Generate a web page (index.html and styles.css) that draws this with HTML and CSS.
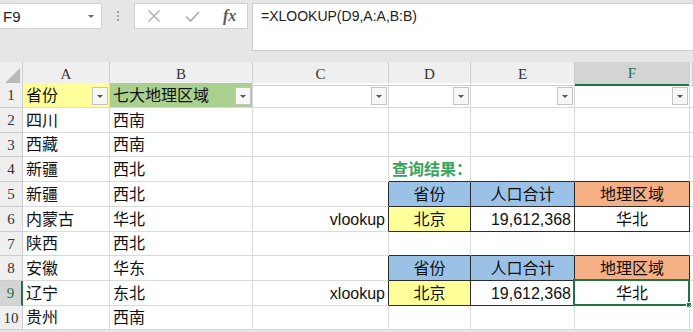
FILE: index.html
```html
<!DOCTYPE html>
<html lang="zh-CN">
<head>
  <meta charset="UTF-8">
  <title>XLOOKUP</title>
  <link rel="stylesheet" href="styles.css">
</head>
<body>
  <div class="toolbar">
    <div class="namebox">
      <span>F9</span>
      <span class="caret"></span>
    </div>
    <div class="grip"><i></i><i></i><i></i></div>
    <div class="fxbox">
      <svg width="14" height="12" viewBox="0 0 14 12"><path d="M1.5 0.5 L12.5 11.5 M12.5 0.5 L1.5 11.5" stroke="#a8a8a8" stroke-width="1.3" fill="none"/></svg>
      <svg width="15" height="11" viewBox="0 0 15 11"><path d="M1 5.5 L5.5 10 L14 1" stroke="#a8a8a8" stroke-width="1.6" fill="none"/></svg>
      <span class="fx">fx</span>
    </div>
    <div class="formula">=XLOOKUP(D9,A:A,B:B)</div>
  </div>

  <div class="sheet">
    <div class="row head">
      <div class="cell corner"><span class="tri"></span></div>
      <div class="cell">A</div>
      <div class="cell">B</div>
      <div class="cell">C</div>
      <div class="cell">D</div>
      <div class="cell">E</div>
      <div class="cell active">F</div>
      <div class="cell"></div>
    </div>

    <div class="row">
      <div class="cell rh">1</div>
      <div class="cell filter yellow">省份<span class="drop"></span></div>
      <div class="cell filter green">七大地理区域<span class="drop"></span></div>
      <div class="cell filter"><span class="drop"></span></div>
      <div class="cell filter"><span class="drop"></span></div>
      <div class="cell filter"><span class="drop"></span></div>
      <div class="cell filter"><span class="drop"></span></div>
      <div class="cell"></div>
    </div>

    <div class="row">
      <div class="cell rh">2</div>
      <div class="cell">四川</div>
      <div class="cell">西南</div>
      <div class="cell"></div>
      <div class="cell"></div>
      <div class="cell"></div>
      <div class="cell"></div>
      <div class="cell"></div>
    </div>

    <div class="row short">
      <div class="cell rh">3</div>
      <div class="cell">西藏</div>
      <div class="cell">西南</div>
      <div class="cell"></div>
      <div class="cell"></div>
      <div class="cell"></div>
      <div class="cell"></div>
      <div class="cell"></div>
    </div>

    <div class="row">
      <div class="cell rh">4</div>
      <div class="cell">新疆</div>
      <div class="cell">西北</div>
      <div class="cell"></div>
      <div class="cell dark-b title">查询结果：</div>
      <div class="cell dark-b"></div>
      <div class="cell dark-b"></div>
      <div class="cell"></div>
    </div>

    <div class="row">
      <div class="cell rh">5</div>
      <div class="cell">新疆</div>
      <div class="cell">西北</div>
      <div class="cell dark-r"></div>
      <div class="cell dark-r dark-b center blue">省份</div>
      <div class="cell dark-r dark-b center blue">人口合计</div>
      <div class="cell dark-r dark-b center orange">地理区域</div>
      <div class="cell"></div>
    </div>

    <div class="row">
      <div class="cell rh">6</div>
      <div class="cell">内蒙古</div>
      <div class="cell">华北</div>
      <div class="cell dark-r right">vlookup</div>
      <div class="cell dark-r dark-b center yellow">北京</div>
      <div class="cell dark-r dark-b right">19,612,368</div>
      <div class="cell dark-r dark-b center">华北</div>
      <div class="cell"></div>
    </div>

    <div class="row short">
      <div class="cell rh">7</div>
      <div class="cell">陕西</div>
      <div class="cell">西北</div>
      <div class="cell"></div>
      <div class="cell dark-b"></div>
      <div class="cell dark-b"></div>
      <div class="cell dark-b"></div>
      <div class="cell"></div>
    </div>

    <div class="row">
      <div class="cell rh">8</div>
      <div class="cell">安徽</div>
      <div class="cell">华东</div>
      <div class="cell dark-r"></div>
      <div class="cell dark-r dark-b center blue">省份</div>
      <div class="cell dark-r dark-b center blue">人口合计</div>
      <div class="cell dark-r dark-b center orange">地理区域</div>
      <div class="cell"></div>
    </div>

    <div class="row">
      <div class="cell rh active">9</div>
      <div class="cell">辽宁</div>
      <div class="cell">东北</div>
      <div class="cell dark-r right">xlookup</div>
      <div class="cell dark-r dark-b center yellow">北京</div>
      <div class="cell dark-r dark-b right">19,612,368</div>
      <div class="cell dark-r dark-b center selected">华北<span class="sel"><i></i></span></div>
      <div class="cell"></div>
    </div>

    <div class="row short">
      <div class="cell rh">10</div>
      <div class="cell">贵州</div>
      <div class="cell">西南</div>
      <div class="cell"></div>
      <div class="cell"></div>
      <div class="cell"></div>
      <div class="cell"></div>
      <div class="cell"></div>
    </div>
  </div>
</body>
</html>
```

FILE: styles.css
```css
:root {
  --grid: #dadada;
  --head: #efefef;
  --excel: #217346;
  --dark: #2b2b2b;
}

* {
  margin: 0;
  padding: 0;
  box-sizing: border-box;
}

body {
  width: 693px;
  height: 332px;
  overflow: hidden;
  background: #e6e6e6;
  font-family: "Liberation Sans", "Noto Sans CJK SC", sans-serif;
  color: #111;
}

/* formula bar */

.toolbar {
  height: 62px;
  padding-top: 3px;
  display: flex;
  align-items: flex-start;
}

.namebox {
  width: 102px;
  height: 26px;
  background: #fff;
  border: 1px solid #d2d2d2;
  border-left: none;
  display: flex;
  align-items: center;
  justify-content: space-between;
  padding: 0 7px 0 3px;
  font-size: 15px;
  color: #222;
}

.caret {
  width: 0;
  height: 0;
  border-left: 3px solid transparent;
  border-right: 3px solid transparent;
  border-top: 3px solid #666;
}

.grip {
  width: 32px;
  height: 26px;
  display: flex;
  flex-direction: column;
  align-items: center;
  justify-content: center;
  gap: 2px;
}

.grip i {
  width: 2px;
  height: 2px;
  background: #a0a0a0;
}

.fxbox {
  width: 114px;
  height: 26px;
  background: #fff;
  border: 1px solid #d2d2d2;
  display: flex;
  align-items: center;
  padding-left: 12px;
  gap: 24px;
}

.fx {
  font-family: "Liberation Serif", serif;
  font-style: italic;
  font-weight: bold;
  font-size: 16px;
  color: #5a5a5a;
  margin-left: -1px;
}

.formula {
  flex: 1;
  height: 48px;
  margin-left: 4px;
  background: #fff;
  border: 1px solid #cdcdcd;
  border-right: none;
  padding: 4px 8px;
  font-size: 14px;
  line-height: 16px;
  color: #222;
}

/* sheet */

.sheet {
  background: #fff;
}

.row {
  display: grid;
  grid-template-columns: 23px 87px 143px 136px 82px 104px 115px 1fr;
  height: 25px;
}

.row.short {
  height: 24px;
}

.cell {
  border-right: 1px solid var(--grid);
  border-bottom: 1px solid var(--grid);
  display: flex;
  align-items: flex-end;
  padding: 0 3px 0 3px;
  font-size: 16px;
  line-height: 22px;
  white-space: nowrap;
  position: relative;
}

.row.head {
  height: 21px;
  background: var(--head);
}

.row.head .cell {
  border-color: #cdcdcd;
  justify-content: center;
  align-items: center;
  font-family: "Liberation Serif", serif;
  font-size: 15px;
  color: #333;
  padding: 0;
}

.row.head .active {
  background: #d4d4d4;
  border-bottom: 2px solid var(--excel);
  color: var(--excel);
}

.corner {
  background: var(--head);
}

.tri {
  position: absolute;
  right: 2px;
  bottom: 2px;
  width: 15px;
  height: 15px;
  background: #b9b9b9;
  clip-path: polygon(100% 0, 100% 100%, 0 100%);
}

.rh {
  background: var(--head);
  border-color: #cdcdcd;
  justify-content: center;
  align-items: center;
  padding: 0;
  font-family: "Liberation Serif", serif;
  font-size: 15px;
  color: #333;
}

.rh.active {
  background: #d4d4d4;
  color: var(--excel);
  border-right: 2px solid var(--excel);
}

.filter {
  padding-right: 20px;
}

.drop {
  position: absolute;
  right: 1px;
  bottom: 2px;
  width: 16px;
  height: 18px;
  background: #f7f7f7;
  border: 1px solid #c4c4c4;
  display: flex;
  align-items: center;
  justify-content: center;
}

.drop::after {
  content: "";
  border-left: 3px solid transparent;
  border-right: 3px solid transparent;
  border-top: 3px solid #555;
}

.yellow {
  background: #ffff99;
}

.green {
  background: #a9d08e;
}

.blue {
  background: #9bc2e6;
}

.orange {
  background: #f4b084;
}

.dark-r {
  border-right-color: var(--dark);
}

.dark-b {
  border-bottom-color: var(--dark);
}

.center {
  justify-content: center;
}

.right {
  justify-content: flex-end;
  padding-right: 3px;
}

.title {
  color: #38a55a;
  font-weight: bold;
  overflow: visible;
}

.sel {
  position: absolute;
  left: -2px;
  top: -2px;
  right: -1px;
  bottom: -1px;
  border: 2px solid var(--excel);
}

.sel i {
  position: absolute;
  right: -4px;
  bottom: -4px;
  width: 6px;
  height: 6px;
  background: var(--excel);
  border: 1px solid #fff;
}
```
